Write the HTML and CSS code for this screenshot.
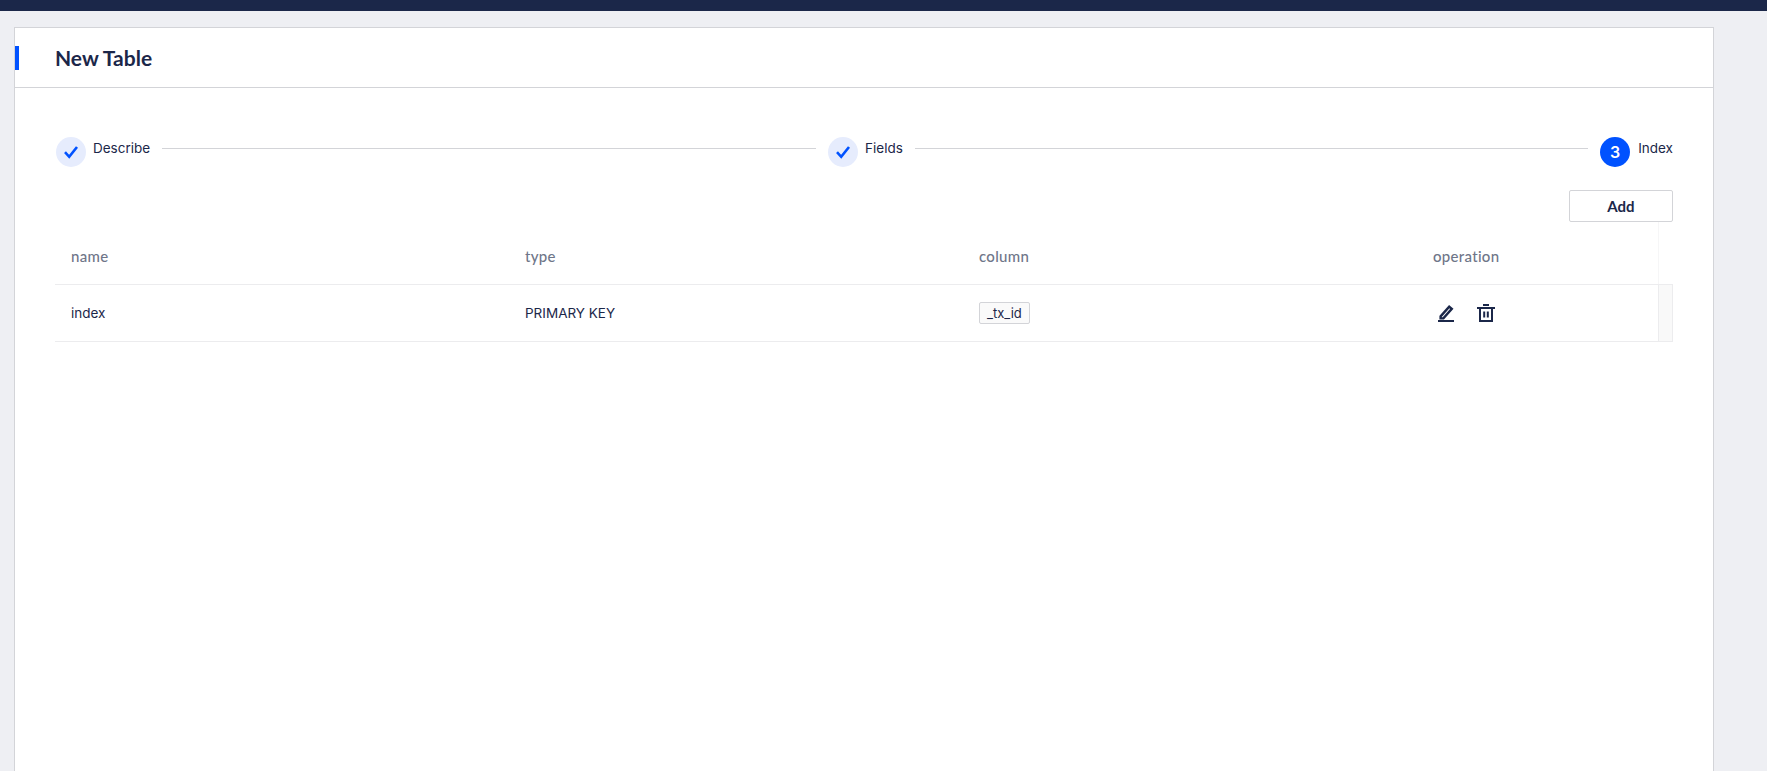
FILE: index.html
```html
<!DOCTYPE html>
<html lang="en">
<head>
    <meta charset="UTF-8">
    <title>New Table</title>
    <link rel="stylesheet" href="styles.css">
</head>
<body>
    <div class="topbar"></div>

    <div class="card">
        <div class="card-header">
            <h1 class="card-title">New Table</h1>
        </div>

        <div class="card-body">
            <div class="steps">
                <div class="step">
                    <span class="step-icon">
                        <svg width="16" height="14" viewBox="0 0 16 14"><path d="M2 7.2l4.2 4.6L14 2" fill="none" stroke="#0052ff" stroke-width="2.6"/></svg>
                    </span>
                    <span class="step-label">Describe</span>
                    <div class="step-line"></div>
                </div>
                <div class="step">
                    <span class="step-icon">
                        <svg width="16" height="14" viewBox="0 0 16 14"><path d="M2 7.2l4.2 4.6L14 2" fill="none" stroke="#0052ff" stroke-width="2.6"/></svg>
                    </span>
                    <span class="step-label">Fields</span>
                    <div class="step-line"></div>
                </div>
                <div class="step last">
                    <span class="step-icon current">3</span>
                    <span class="step-label">Index</span>
                </div>
            </div>

            <div class="toolbar">
                <button type="button" class="btn">Add</button>
            </div>

            <div class="table">
                <div class="table-row table-head">
                    <div class="cell">name</div>
                    <div class="cell">type</div>
                    <div class="cell">column</div>
                    <div class="cell">operation</div>
                    <div class="scroll-cell"></div>
                </div>
                <div class="table-row">
                    <div class="cell">index</div>
                    <div class="cell">PRIMARY KEY</div>
                    <div class="cell"><span class="tag">_tx_id</span></div>
                    <div class="cell ops">
                        <svg width="18" height="18" viewBox="0 0 18 18">
                            <path d="M3.6 12.4L12.2 2.6l2.6 2.2-8.4 9.6H3.6z" fill="none" stroke="#1b2749" stroke-width="2.4"/>
                            <path d="M1 17h16" stroke="#1b2749" stroke-width="2"/>
                        </svg>
                        <svg width="18" height="18" viewBox="0 0 18 18">
                            <path d="M0 4h18M6 1h6" stroke="#1b2749" stroke-width="2"/>
                            <path d="M3 4v13h12V4" fill="none" stroke="#1b2749" stroke-width="2"/>
                            <path d="M7.2 7.5v6M10.8 7.5v6" stroke="#1b2749" stroke-width="2"/>
                        </svg>
                    </div>
                    <div class="scroll-cell bar"></div>
                </div>
            </div>
        </div>
    </div>
</body>
</html>
```

FILE: styles.css
```css
html, body {
    height: 100%;
}
body {
    margin: 0;
    display: flex;
    flex-direction: column;
    background-color: #eeeff3;
    color: #1b2749;
    font-family: 'Inter', sans-serif;
    font-size: 13.5px;
    overflow: hidden;
}
.topbar {
    height: 11px;
    background-color: #1b2749;
}
.card {
    box-sizing: border-box;
    flex: 1;
    width: 1700px;
    margin: 16px 0 0 14px;
    background-color: white;
    border: 1px solid #d3d4d8;
    border-bottom: none;
}
.card-header {
    height: 59px;
    display: flex;
    align-items: center;
    border-bottom: 1px solid #d3d4d8;
}
.card-title {
    margin: 0;
    padding-left: 36px;
    border-left: 4px solid #0052ff;
    height: 24px;
    line-height: 24px;
    font-family: 'Lato', sans-serif;
    font-size: 21px;
    font-weight: 700;
}
.card-body {
    padding: 49px 40px 0 40px;
}
.steps {
    display: flex;
    align-items: flex-start;
    margin-left: 1px;
}
.step {
    flex: 1;
    display: flex;
    align-items: flex-start;
}
.step.last {
    flex: none;
}
.step-icon {
    width: 30px;
    height: 30px;
    flex: none;
    border-radius: 50%;
    background-color: #e6ecfd;
    display: flex;
    align-items: center;
    justify-content: center;
}
.step-icon.current {
    background-color: #0052ff;
    color: white;
    font-weight: 600;
    font-size: 16px;
}
.step-label {
    margin-left: 7px;
    line-height: 23px;
}
.step.last .step-label {
    margin-left: 8px;
}
.step-line {
    flex: 1;
    height: 1px;
    margin: 11px 12px 0 12px;
    background-color: #d3d4d8;
}
.toolbar {
    display: flex;
    justify-content: flex-end;
    margin-top: 23px;
}
.btn {
    width: 104px;
    height: 32px;
    background-color: white;
    border: 1px solid #d3d4d8;
    border-radius: 2px;
    color: #1b2749;
    font-family: 'Lato', sans-serif;
    font-size: 15px;
    font-weight: 700;
}
.table-row {
    display: flex;
    align-items: center;
    height: 56px;
    border-bottom: 1px solid #ececee;
}
.table-head {
    height: 62px;
    color: #6f7689;
    font-family: 'Lato', sans-serif;
    font-size: 15px;
    font-weight: 500;
    letter-spacing: 0.3px;
}
.table-head > .cell {
    padding-top: 6px;
}
.cell {
    box-sizing: border-box;
    width: 454px;
    padding-left: 16px;
}
.table-row .cell:nth-child(4) {
    width: 241px;
}
.scroll-cell {
    box-sizing: border-box;
    flex: 1;
    height: 100%;
}
.scroll-cell.bar {
    background-color: #f9f9f9;
    border-left: 1px solid #ececee;
    border-right: 1px solid #ececee;
}
.table-head .scroll-cell {
    border-left: 1px solid #f6f6f7;
}
.tag {
    display: inline-block;
    padding: 0 7px;
    height: 22px;
    line-height: 20px;
    box-sizing: border-box;
    border: 1px solid #d3d4d8;
    border-radius: 2px;
    background-color: #fafafa;
    font-size: 13px;
}
.ops {
    display: flex;
    gap: 22px;
    padding-left: 20px;
}
```
